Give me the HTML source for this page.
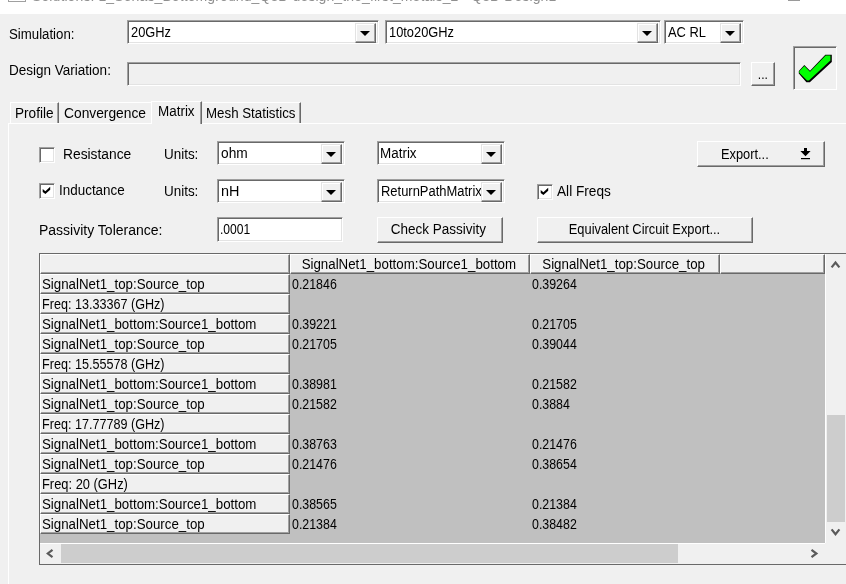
<!DOCTYPE html>
<html><head><meta charset="utf-8"><title>Solutions</title>
<style>
html,body{margin:0;padding:0;}
body{width:846px;height:584px;overflow:hidden;background:#f0f0f0;position:relative;will-change:transform;font-family:"Liberation Sans",sans-serif;font-size:13px;color:#000;}
.abs{position:absolute;white-space:nowrap;}
.titlebar{left:0;top:0;width:846px;height:14px;background:#fff;overflow:hidden;}
.title{left:32px;top:-12.5px;font-size:14px;color:#909090;letter-spacing:0.1px;line-height:17px;}
.lbl{line-height:16px;height:16px;font-size:14px;display:inline-block;transform-origin:0 50%;transform:scaleX(var(--sx,.945));}
.btn .lbl{transform-origin:50% 50%;}
.sunken{box-sizing:border-box;border:1px solid;border-color:#a0a0a0 #fff #fff #a0a0a0;box-shadow:inset 1px 1px 0 #696969, inset -1px -1px 0 #e3e3e3;background:#fff;}
.sunken.dis{background:#f0f0f0;}
.btn{box-sizing:border-box;border:1px solid;border-color:#fff #696969 #696969 #fff;box-shadow:inset -1px -1px 0 #a0a0a0;background:#f0f0f0;text-align:center;}
.cbtn{box-sizing:border-box;border:1px solid;border-color:#e3e3e3 #696969 #696969 #e3e3e3;box-shadow:inset -1px -1px 0 #a0a0a0, inset 1px 1px 0 #fff;background:#f0f0f0;}
.cbtn:after{content:"";position:absolute;left:50%;top:50%;margin-left:-6px;margin-top:-2px;border-left:5px solid transparent;border-right:5px solid transparent;border-top:5px solid #000;}
.ctext{position:absolute;left:2.5px;top:3px;line-height:16px;font-size:14px;white-space:nowrap;transform-origin:0 50%;transform:scaleX(var(--sx,.89));}
.chk{box-sizing:border-box;width:16px;height:16px;border:1px solid;border-color:#a0a0a0 #fff #fff #a0a0a0;box-shadow:inset 1px 1px 0 #696969, inset -1px -1px 0 #e3e3e3;background:#fff;}
.tab{box-sizing:border-box;border-top:1px solid #fff;border-left:1px solid #fff;border-right:1px solid #696969;box-shadow:inset -1px 0 0 #a0a0a0;background:#f0f0f0;font-size:14px;}
.rowh{left:40px;width:250px;height:20px;box-sizing:border-box;border-top:1px solid #fff;border-left:1px solid #fff;border-right:1px solid #696969;border-bottom:1px solid #696969;box-shadow:inset -1px -1px 0 #a0a0a0;background:#f0f0f0;font-size:14px;line-height:19px;padding-left:1px;}
.colh{top:254px;height:20px;box-sizing:border-box;border-top:1px solid #fff;border-left:1px solid #fff;border-right:1px solid #696969;border-bottom:1px solid #696969;box-shadow:inset -1px -1px 0 #a0a0a0;background:#f0f0f0;font-size:14px;line-height:19px;text-align:center;}
.val{font-size:14px;line-height:16px;--sx:.885;}
.t{display:inline-block;transform-origin:0 50%;transform:scaleX(var(--sx,.95));white-space:nowrap;}
.t.tc{transform-origin:50% 50%;}
</style></head><body>

<div class="abs titlebar">
  <div class="abs" style="left:8px;top:-15.5px;width:18px;height:17px;border:1px solid #a0a0a0;box-sizing:border-box;"></div>
  <div class="abs title">Solutions: 1_Serias_Bottomground_Q3D design_the_first_metals_2 - Q3D Design1</div>
  <div class="abs" style="left:788px;top:0;width:12px;height:1px;background:#9a9a9a;"></div>
</div>

<!-- Row 1 -->
<div class="abs lbl" style="left:9px;top:26px;">Simulation:</div>
<div class="abs sunken" style="left:127px;top:20px;width:252px;height:24px;"><span class="ctext" style="--sx:.917">20GHz</span>
  <div class="abs cbtn" style="right:2px;top:2px;width:21px;height:20px;"></div></div>
<div class="abs sunken" style="left:385px;top:20px;width:276px;height:24px;"><span class="ctext" style="--sx:.917">10to20GHz</span>
  <div class="abs cbtn" style="right:2px;top:2px;width:21px;height:20px;"></div></div>
<div class="abs sunken" style="left:664px;top:20px;width:80px;height:24px;"><span class="ctext" style="--sx:.92">AC RL</span>
  <div class="abs cbtn" style="right:2px;top:2px;width:21px;height:20px;"></div></div>

<!-- Row 2 -->
<div class="abs lbl" style="left:9px;top:62px;--sx:.965">Design Variation:</div>
<div class="abs sunken dis" style="left:127px;top:62px;width:614px;height:24px;"></div>
<div class="abs btn" style="left:751px;top:62px;width:24px;height:24px;line-height:23px;font-size:14px;"><span class="t tc" style="--sx:.86">...</span></div>
<div class="abs" style="left:793px;top:46px;width:44px;height:44px;box-sizing:border-box;border:1px solid;border-color:#a0a0a0 #fff #fff #a0a0a0;box-shadow:inset 1px 1px 0 #696969;background:#f0f0f0;">
 <svg class="abs" style="left:-1px;top:-1px" width="44" height="44" viewBox="793 46 44 44">
  <polygon points="798.8,71 804.3,65 810,70.8 825.3,54.8 831.8,54.8 831.8,62 809.8,82.3 806.4,82.3 798.8,73.4" fill="#000"/>
  <polygon points="799.3,71.2 804.3,65.9 810,71.7 825.7,55.5 830.4,55.5 830.4,60.6 808.9,80.6 807.1,80.6 799.3,72.7" fill="#00ff00"/>
 </svg>
</div>

<!-- Tabs -->
<div class="abs" style="left:8px;top:123px;width:838px;height:470px;border-top:1px solid #fff;border-left:1px solid #fff;box-sizing:border-box;"></div>
<div class="abs tab" style="left:10px;top:102px;width:49px;height:21px;line-height:20px;padding-left:4px;"><span class="t" style="--sx:.97">Profile</span></div>
<div class="abs tab" style="left:59px;top:102px;width:93px;height:21px;line-height:20px;padding-left:5px;border-left:none;border-right:none;box-shadow:none;"><span class="t" style="--sx:.985">Convergence</span></div>
<div class="abs tab" style="left:203px;top:102px;width:98px;height:21px;line-height:20px;padding-left:3px;border-left:none;"><span class="t" style="--sx:.95">Mesh Statistics</span></div>
<div class="abs tab" style="left:151px;top:101px;width:51px;height:23px;line-height:19px;padding-left:6px;"><span class="t" style="--sx:.96">Matrix</span></div>

<!-- Controls -->
<div class="abs chk" style="left:39px;top:147px;"></div>
<div class="abs lbl" style="left:63px;top:146px;--sx:.985">Resistance</div>
<div class="abs lbl" style="left:164px;top:146px;--sx:.96">Units:</div>
<div class="abs sunken" style="left:217px;top:141px;width:128px;height:24px;"><span class="ctext" style="--sx:.98">ohm</span>
  <div class="abs cbtn" style="right:2px;top:2px;width:21px;height:20px;"></div></div>
<div class="abs sunken" style="left:377px;top:141px;width:128px;height:24px;"><span class="ctext" style="left:2px;--sx:.96">Matrix</span>
  <div class="abs cbtn" style="right:2px;top:2px;width:21px;height:20px;"></div></div>
<div class="abs btn" style="left:697px;top:141px;width:128px;height:26px;"><span class="abs lbl" style="left:22.5px;top:4px;--sx:.915;transform-origin:0 50%">Export...</span>
  <svg class="abs" style="left:102px;top:6px" width="12" height="13" viewBox="0 0 12 13"><path d="M4 0h3v3h3.6l-5.1 5.2-5.1-5.2h3.6z" fill="#000"/><rect x="1" y="10" width="9" height="1.2" fill="#000"/></svg>
</div>

<div class="abs chk" style="left:39px;top:183px;"></div>
<svg class="abs" style="left:39px;top:183px" width="15" height="15" viewBox="0 0 15 15"><polygon points="3.7,6 6.4,8.2 11.2,3.8 11.2,6.8 6.4,11 3.7,8.9" fill="#000"/></svg>
<div class="abs lbl" style="left:59px;top:182px;--sx:.96">Inductance</div>
<div class="abs lbl" style="left:164px;top:183px;--sx:.96">Units:</div>
<div class="abs sunken" style="left:217px;top:179px;width:128px;height:24px;"><span class="ctext" style="--sx:1.03">nH</span>
  <div class="abs cbtn" style="right:2px;top:2px;width:21px;height:20px;"></div></div>
<div class="abs sunken" style="left:377px;top:179px;width:128px;height:24px;"><span class="ctext" style="--sx:.925">ReturnPathMatrix</span>
  <div class="abs cbtn" style="right:2px;top:2px;width:21px;height:20px;"></div></div>
<div class="abs chk" style="left:537px;top:184px;"></div>
<svg class="abs" style="left:537px;top:184px" width="15" height="15" viewBox="0 0 15 15"><polygon points="3.7,6 6.4,8.2 11.2,3.8 11.2,6.8 6.4,11 3.7,8.9" fill="#000"/></svg>
<div class="abs lbl" style="left:557px;top:183px;--sx:.975">All Freqs</div>

<div class="abs lbl" style="left:39px;top:222px;--sx:1">Passivity Tolerance:</div>
<div class="abs sunken" style="left:217px;top:217px;width:126px;height:25px;"><span class="ctext" style="left:2px;top:3px;--sx:.865">.0001</span></div>
<div class="abs btn" style="left:377px;top:217px;width:126px;height:26px;"><span class="lbl" style="line-height:22px;--sx:.965;position:relative;left:-1.5px">Check Passivity</span></div>
<div class="abs btn" style="left:537px;top:217px;width:216px;height:26px;"><span class="lbl" style="line-height:22px;--sx:.918;position:relative;left:-1px">Equivalent Circuit Export...</span></div>

<!-- Grid -->
<div class="abs" style="left:39px;top:253px;width:807px;height:312px;box-sizing:border-box;border:1px solid #696969;border-right:none;background:#c0c0c0;"></div>
<div class="abs colh" style="left:40px;width:250px;"></div>
<div class="abs colh" style="left:290px;width:240px;"><span class="t tc" style="position:relative;left:-1px">SignalNet1_bottom:Source1_bottom</span></div>
<div class="abs colh" style="left:530px;width:190px;"><span class="t tc" style="position:relative;left:-1px">SignalNet1_top:Source_top</span></div>
<div class="abs colh" style="left:720px;width:105px;"></div>

<div class="abs rowh" style="top:274px;"><span class="t">SignalNet1_top:Source_top</span></div>
<div class="abs rowh" style="top:294px;"><span class="t" style="--sx:.9">Freq: 13.33367 (GHz)</span></div>
<div class="abs rowh" style="top:314px;"><span class="t">SignalNet1_bottom:Source1_bottom</span></div>
<div class="abs rowh" style="top:334px;"><span class="t">SignalNet1_top:Source_top</span></div>
<div class="abs rowh" style="top:354px;"><span class="t" style="--sx:.9">Freq: 15.55578 (GHz)</span></div>
<div class="abs rowh" style="top:374px;"><span class="t">SignalNet1_bottom:Source1_bottom</span></div>
<div class="abs rowh" style="top:394px;"><span class="t">SignalNet1_top:Source_top</span></div>
<div class="abs rowh" style="top:414px;"><span class="t" style="--sx:.9">Freq: 17.77789 (GHz)</span></div>
<div class="abs rowh" style="top:434px;"><span class="t">SignalNet1_bottom:Source1_bottom</span></div>
<div class="abs rowh" style="top:454px;"><span class="t">SignalNet1_top:Source_top</span></div>
<div class="abs rowh" style="top:474px;"><span class="t" style="--sx:.92">Freq: 20 (GHz)</span></div>
<div class="abs rowh" style="top:494px;"><span class="t">SignalNet1_bottom:Source1_bottom</span></div>
<div class="abs rowh" style="top:514px;"><span class="t">SignalNet1_top:Source_top</span></div>

<div class="abs val" style="left:292px;top:276px;"><span class="t">0.21846</span></div><div class="abs val" style="left:532px;top:276px;"><span class="t">0.39264</span></div>
<div class="abs val" style="left:292px;top:316px;"><span class="t">0.39221</span></div><div class="abs val" style="left:532px;top:316px;"><span class="t">0.21705</span></div>
<div class="abs val" style="left:292px;top:336px;"><span class="t">0.21705</span></div><div class="abs val" style="left:532px;top:336px;"><span class="t">0.39044</span></div>
<div class="abs val" style="left:292px;top:376px;"><span class="t">0.38981</span></div><div class="abs val" style="left:532px;top:376px;"><span class="t">0.21582</span></div>
<div class="abs val" style="left:292px;top:396px;"><span class="t">0.21582</span></div><div class="abs val" style="left:532px;top:396px;"><span class="t">0.3884</span></div>
<div class="abs val" style="left:292px;top:436px;"><span class="t">0.38763</span></div><div class="abs val" style="left:532px;top:436px;"><span class="t">0.21476</span></div>
<div class="abs val" style="left:292px;top:456px;"><span class="t">0.21476</span></div><div class="abs val" style="left:532px;top:456px;"><span class="t">0.38654</span></div>
<div class="abs val" style="left:292px;top:496px;"><span class="t">0.38565</span></div><div class="abs val" style="left:532px;top:496px;"><span class="t">0.21384</span></div>
<div class="abs val" style="left:292px;top:516px;"><span class="t">0.21384</span></div><div class="abs val" style="left:532px;top:516px;"><span class="t">0.38482</span></div>

<!-- scrollbars -->
<div class="abs" style="left:826px;top:254px;width:20px;height:290px;background:#f0f0f0;"></div>
<div class="abs" style="left:825px;top:254px;width:1px;height:290px;background:#fff;"></div>
<div class="abs" style="left:827px;top:415px;width:18px;height:107px;background:#cdcdcd;"></div>
<svg class="abs" style="left:0;top:0" width="846" height="584" viewBox="0 0 846 584">
 <g fill="none" stroke="#5a5a5a" stroke-width="2.2" stroke-linejoin="miter" stroke-miterlimit="10">
  <path d="M831.6,267.4 L835.5,262.5 L839.4,267.4"/>
  <path d="M831.6,529.4 L835.5,534.3 L839.4,529.4"/>
 </g>
</svg>
<div class="abs" style="left:40px;top:543px;width:806px;height:21px;background:#f0f0f0;"></div>
<div class="abs" style="left:40px;top:543px;width:785px;height:1px;background:#fff;"></div>
<div class="abs" style="left:61px;top:544px;width:617px;height:19px;background:#cdcdcd;"></div>
<svg class="abs" style="left:0;top:0" width="846" height="584" viewBox="0 0 846 584">
 <g fill="none" stroke="#5a5a5a" stroke-width="2.2" stroke-linejoin="miter" stroke-miterlimit="10">
  <path d="M52.5,549.8 L47.8,553.5 L52.5,557.2"/>
  <path d="M811.5,549.8 L816.4,553.5 L811.5,557.2"/>
 </g>
</svg>

</body></html>
